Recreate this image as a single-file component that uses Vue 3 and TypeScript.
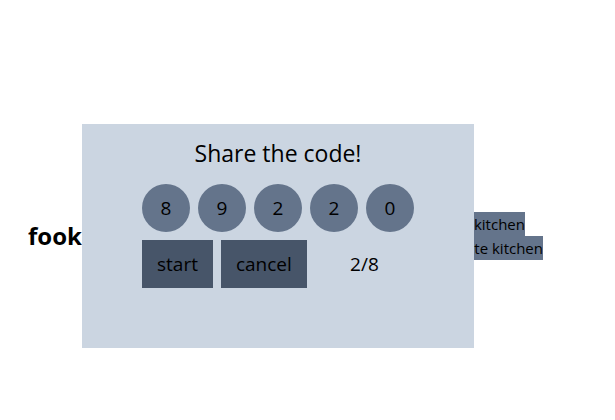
<script setup lang="ts">
import { ref } from 'vue'

const code = ref<string[]>(['8', '9', '2', '2', '0'])
const players = ref(2)
const maxPlayers = 8
</script>

<template>
  <main class="page">
    <div class="stage">
      <div class="lobby">
        <h1 class="brand">fooking</h1>
        <nav class="menu">
          <button type="button" class="menu-button">join kitchen</button>
          <button type="button" class="menu-button">create kitchen</button>
        </nav>
      </div>

      <section class="dialog" role="dialog" aria-labelledby="dialog-title">
        <h2 id="dialog-title" class="dialog-title">Share the code!</h2>
        <div class="panel">
          <div class="code">
            <span v-for="(digit, index) in code" :key="index" class="digit">{{ digit }}</span>
          </div>
          <div class="actions">
            <button type="button" class="action">start</button>
            <button type="button" class="action">cancel</button>
            <span class="count">{{ players }}/{{ maxPlayers }}</span>
          </div>
        </div>
      </section>
    </div>
  </main>
</template>

<style>
body {
  margin: 0;
  background: #fff;
}
</style>

<style scoped>
.page {
  box-sizing: border-box;
  min-height: 100vh;
  padding: 52px 59px 0 0;
  display: grid;
  color: #000;
  font-family: "Segoe UI", "Open Sans", "Noto Sans", sans-serif;
  font-size: 15px;
  line-height: 24px;
}

.stage {
  position: relative;
  display: grid;
  align-items: center;
}

.lobby {
  display: flex;
  align-items: center;
  justify-content: space-between;
  padding: 0 13px 0 28px;
}

.brand {
  margin: 0;
  font-size: 24px;
  line-height: 32px;
  font-weight: 700;
}

.menu {
  display: flex;
  flex-direction: column;
  align-items: flex-start;
}

button {
  margin: 0;
  border: 0;
  color: inherit;
  font: inherit;
  cursor: pointer;
}

.menu-button {
  padding: 0;
  background: #64748b;
}

.dialog {
  position: absolute;
  top: 50%;
  left: 50%;
  transform: translate(-50%, -50%);
  box-sizing: border-box;
  width: 392px;
  max-width: 100%;
  min-height: 224px;
  padding: 15px;
  display: flex;
  flex-direction: column;
  align-items: center;
  gap: 17px;
  background: #cbd5e1;
}

.dialog-title {
  margin: 0;
  font-size: 23px;
  line-height: 28px;
  font-weight: 400;
}

.panel {
  display: flex;
  flex-direction: column;
  gap: 8px;
  font-size: 19px;
  line-height: 28px;
}

.code,
.actions {
  display: flex;
  gap: 8px;
}

.digit {
  width: 48px;
  height: 48px;
  display: grid;
  place-items: center;
  border-radius: 50%;
  background: #64748b;
}

.action {
  height: 48px;
  padding: 0 15px;
  background: #475569;
}

.count {
  flex: 1;
  display: grid;
  place-items: center;
}
</style>
